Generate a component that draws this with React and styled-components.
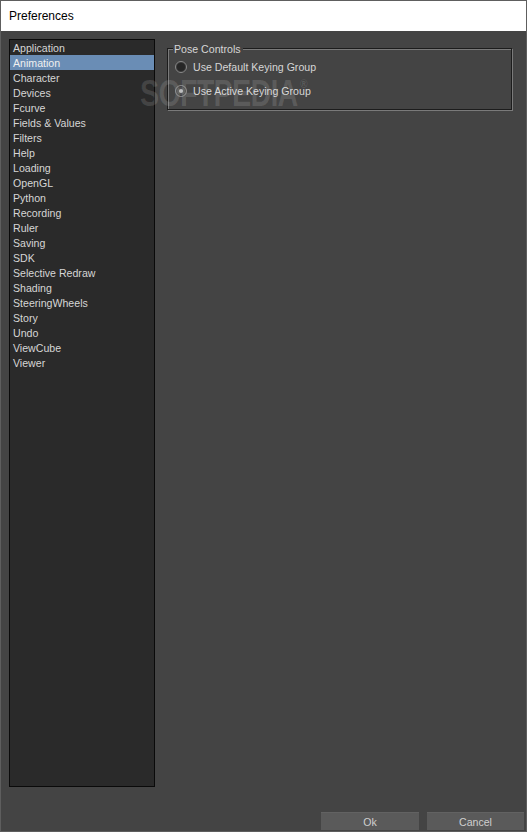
import styled, { createGlobalStyle } from "styled-components";

const GlobalStyle = createGlobalStyle`
  html, body {
    margin: 0;
    padding: 0;
    background: #444444;
  }
  body {
    font-family: "Liberation Sans", Arial, sans-serif;
  }
`;

const Window = styled.div`
  width: 527px;
  height: 832px;
  box-sizing: border-box;
  border: 1px solid #5e5e5e;
  display: flex;
  flex-direction: column;
  background: #444444;
  position: relative;
  overflow: hidden;
`;

const TitleBar = styled.div`
  height: 30px;
  background: #ffffff;
  display: flex;
  align-items: center;
  padding-left: 8px;
  font-size: 12px;
  color: #000;
`;

const Body = styled.div`
  flex: 1;
  display: flex;
  flex-direction: column;
  padding: 8px 2px 1px 8px;
`;

const Main = styled.div`
  display: flex;
  gap: 12px;
  height: 748px;
`;

const List = styled.div`
  width: 146px;
  box-sizing: border-box;
  border: 1px solid #0a0a0a;
  background: #2a2a2a;
  display: flex;
  flex-direction: column;
`;

const Item = styled.div`
  height: 15px;
  line-height: 17px;
  padding-left: 3px;
  font-size: 10.6px;
  color: ${(props) => (props.selected ? "#f0f0f0" : "#d6d6d6")};
  background: ${(props) => (props.selected ? "#6a8db5" : "transparent")};
  white-space: nowrap;
  overflow: hidden;
`;

const Panel = styled.div`
  flex: 1;
  padding-top: 9px;
`;

const Group = styled.div`
  width: 345px;
  height: 62px;
  box-sizing: border-box;
  border: 1px solid #1c1c1c;
  box-shadow: inset 1px 1px 0 #7a7a7a, 1px 1px 0 #7a7a7a;
  position: relative;
  padding: 11px 0 0 7px;
  display: flex;
  flex-direction: column;
  gap: 10px;
`;

const Legend = styled.span`
  position: absolute;
  top: -7px;
  left: 5px;
  padding: 0 2px 0 1px;
  background: #444444;
  font-size: 10.6px;
  line-height: 15px;
  color: #d6d6d6;
`;

const RadioRow = styled.div`
  display: flex;
  align-items: center;
  gap: 6px;
  height: 14px;
  font-size: 10.6px;
  color: #d6d6d6;
`;

const Radio = styled.span`
  width: 12px;
  height: 12px;
  box-sizing: border-box;
  border-radius: 50%;
  border: 1px solid #8a8a8a;
  box-shadow: inset 0 0 0 1px #3a3a3a;
  background: ${(props) => (props.checked ? "#505050" : "#262626")};
  display: flex;
  align-items: center;
  justify-content: center;
  &::after {
    content: "";
    width: 4px;
    height: 4px;
    border-radius: 50%;
    background: ${(props) => (props.checked ? "#bdbdbd" : "transparent")};
  }
`;

const Footer = styled.div`
  margin-top: 25px;
  display: flex;
  justify-content: flex-end;
  gap: 8px;
`;

const Button = styled.button`
  width: ${(props) => props.w}px;
  height: 18px;
  padding: 1px 0 0;
  border: none;
  border-top: 1px solid #626262;
  background: #5a5a5a;
  color: #cfcfcf;
  font-family: "Liberation Sans", Arial, sans-serif;
  font-size: 10.6px;
`;

const Watermark = styled.div`
  position: absolute;
  left: 139px;
  top: 72px;
  font-family: "Liberation Sans", Arial, sans-serif;
  font-weight: bold;
  font-size: 36px;
  letter-spacing: -1px;
  color: rgba(255, 255, 255, 0.13);
  pointer-events: none;
  transform: scaleX(0.8);
  transform-origin: left top;
  white-space: nowrap;
  sup {
    font-size: 13px;
    vertical-align: top;
    position: relative;
    top: 3px;
    margin-left: 3px;
  }
`;

const items = [
  "Application",
  "Animation",
  "Character",
  "Devices",
  "Fcurve",
  "Fields & Values",
  "Filters",
  "Help",
  "Loading",
  "OpenGL",
  "Python",
  "Recording",
  "Ruler",
  "Saving",
  "SDK",
  "Selective Redraw",
  "Shading",
  "SteeringWheels",
  "Story",
  "Undo",
  "ViewCube",
  "Viewer",
];

export default function App() {
  return (
    <>
      <GlobalStyle />
      <Window>
        <TitleBar>Preferences</TitleBar>
        <Body>
          <Main>
            <List>
              {items.map((name) => (
                <Item key={name} selected={name === "Animation"}>
                  {name}
                </Item>
              ))}
            </List>
            <Panel>
              <Group>
                <Legend>Pose Controls</Legend>
                <RadioRow>
                  <Radio />
                  Use Default Keying Group
                </RadioRow>
                <RadioRow>
                  <Radio checked />
                  Use Active Keying Group
                </RadioRow>
              </Group>
            </Panel>
          </Main>
          <Footer>
            <Button w={98}>Ok</Button>
            <Button w={97}>Cancel</Button>
          </Footer>
        </Body>
        <Watermark>
          SOFTPEDIA<sup>®</sup>
        </Watermark>
      </Window>
    </>
  );
}
